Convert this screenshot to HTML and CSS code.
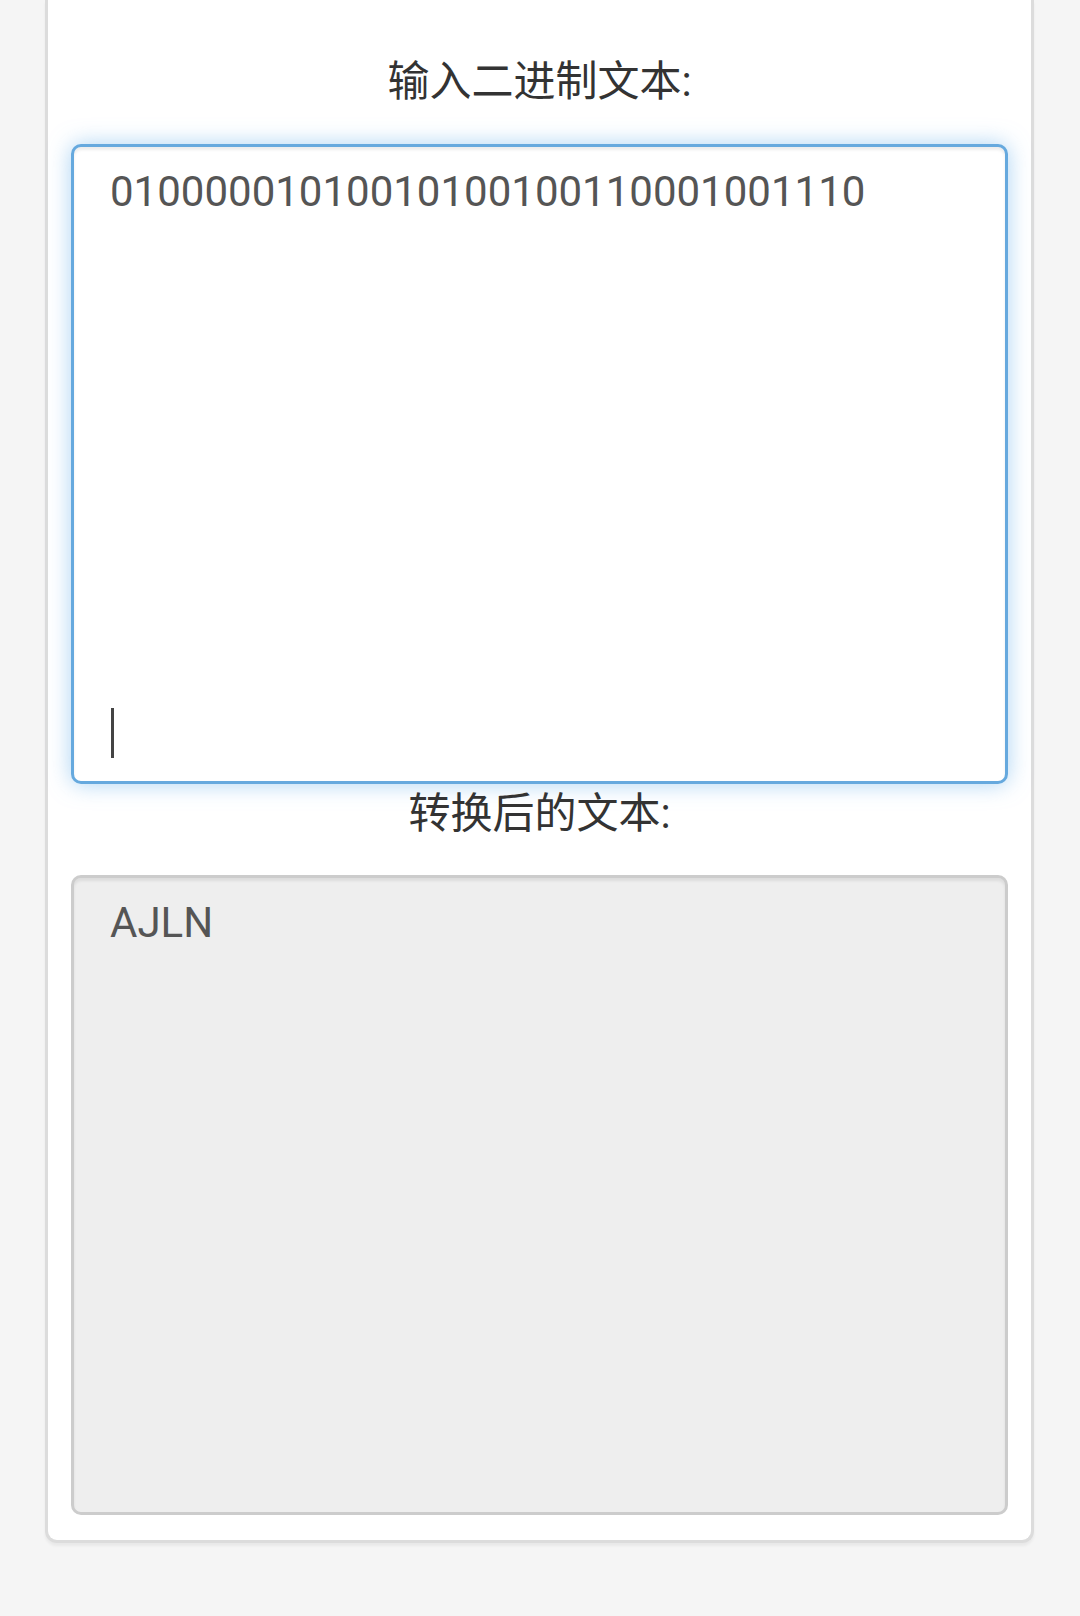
FILE: index.html
```html
<!DOCTYPE html>
<html lang="zh-CN">
<head>
<meta charset="utf-8">
<title>二进制转文本</title>
<link rel="stylesheet" href="styles.css">
</head>
<body>
<main class="card">
  <div class="label label-first">输入二进制文本:</div>
  <div class="field field-focus">
    <div class="line">01000001010010100100110001001110</div>
    <div class="caret-line"><span class="caret"></span></div>
  </div>
  <div class="label">转换后的文本:</div>
  <div class="field field-readonly">
    <div class="line">AJLN</div>
  </div>
</main>
</body>
</html>
```
FILE: styles.css
```css
html, body {
  margin: 0;
  padding: 0;
  background: #f5f5f5;
}
body {
  font-family: Roboto, "Noto Sans CJK SC", sans-serif;
  font-size: 42px;
  line-height: 60px;
  color: #333;
  height: 1616px;
  overflow: hidden;
}
.card {
  margin: 0 46px 0 45px;
  background: #fff;
  border: 3px solid #dcdcdc;
  border-top: 0;
  border-radius: 0 0 12px 12px;
  box-shadow: 0 3px 3px rgba(0, 0, 0, 0.05);
  padding: 0 23px 25px;
  display: flex;
  flex-direction: column;
}
.label {
  text-align: center;
  height: 60px;
  margin-bottom: 31px;
}
.label-first {
  margin-top: 52px;
  margin-bottom: 32px;
}
.field {
  box-sizing: border-box;
  height: 640px;
  border-radius: 10px;
  padding: 15px 36px 18px;
  color: #555;
  display: flex;
  flex-direction: column;
  justify-content: space-between;
}
.field-focus {
  background: #fff;
  border: 3px solid #66a9de;
  box-shadow: inset 0 3px 3px rgba(0, 0, 0, 0.075), 0 0 22px rgba(102, 175, 233, 0.55);
}
.field-readonly {
  background: #eeeeee;
  border: 3px solid #cccccc;
  box-shadow: inset 0 3px 3px rgba(0, 0, 0, 0.075);
  justify-content: flex-start;
}
.line {
  height: 60px;
  white-space: pre;
}
.caret-line {
  height: 60px;
}
.caret {
  display: block;
  width: 3px;
  height: 50px;
  margin-top: 5px;
  margin-left: 1px;
  background: #444;
}
```
